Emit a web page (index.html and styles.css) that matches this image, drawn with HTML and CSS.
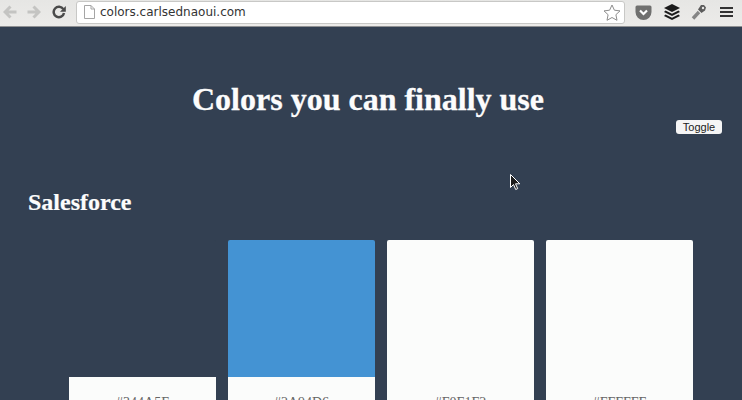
FILE: index.html
```html
<!DOCTYPE html>
<html lang="en">
<head>
<meta charset="utf-8">
<title>Colors you can finally use</title>
<link rel="stylesheet" href="styles.css">
</head>
<body>
<header class="chrome">
  <svg class="nav" width="14" height="14" viewBox="0 0 14 14"><path d="M13.500 7H3M7.500 1.500 2 7l5.500 5.500" fill="none" stroke="#c4c4c2" stroke-width="3"/></svg>
  <svg class="nav next" width="14" height="14" viewBox="0 0 14 14"><path d="M.5 7H11M6.500 1.500 12 7l-5.500 5.500" fill="none" stroke="#c4c4c2" stroke-width="3"/></svg>
  <svg class="nav reload" width="14" height="14" viewBox="0 0 14 14"><path d="M11.300 4.200A5.200 5.200 0 1 0 12 8" fill="none" stroke="#4a4a4a" stroke-width="2.500"/><path d="M13.800 1v5.800H8z" fill="#4a4a4a"/></svg>
  <div class="omnibox">
    <svg class="doc" width="11" height="14" viewBox="0 0 11 14"><path d="M.5.500h6.500l3.500 3.500v9.500H.500zM7 .500V4h3.500" fill="#fff" stroke="#a5a5a5"/></svg>
    <span class="url">colors.carlsednaoui.com</span>
    <svg class="star" width="18" height="17" viewBox="0 0 18 17"><path d="m9 1 2.400 5.200 5.600.700-4.100 3.800 1.100 5.600L9 13.500l-5 2.800 1.100-5.600L1 6.900l5.600-.7z" fill="#fff" stroke="#8d8d8d"/></svg>
  </div>
  <svg class="ext pocket" width="17" height="15" viewBox="0 0 17 15"><path d="M2 .500h13A1.500 1.500 0 0 1 16.500 2v5a8 8 0 0 1-16 0V2A1.500 1.500 0 0 1 2 .500z" fill="#70706f"/><path d="m5 5.500 3.500 3.500L12 5.500" fill="none" stroke="#fff" stroke-width="2.200"/></svg>
  <svg class="ext layers" width="16" height="16" viewBox="0 0 16 16"><path d="M8 0l8 4-8 4-8-4z" fill="#1b1b1b"/><path d="M1.500 6.500 8 9.800l6.500-3.300L16 8l-8 4-8-4z" fill="#1b1b1b"/><path d="M1.500 10.500 8 13.800l6.500-3.300L16 12l-8 4-8-4z" fill="#1b1b1b"/></svg>
  <svg class="ext wrench" width="16" height="16" viewBox="0 0 16 16"><path d="M2 14.500 8 8" stroke="#858585" stroke-width="3.400" fill="none"/><path d="M10 1h3l2 2.500-1 3-3.500 2.500L7 5.500z" fill="#5c5c5c"/><circle cx="12" cy="4" r="1.200" fill="#e8e8e6"/></svg>
  <div class="menu"><i></i><i></i><i></i></div>
</header>
<main class="page">
  <h1 class="title">Colors you can finally use</h1>
  <div class="toggle-row"><button class="toggle">Toggle</button></div>
  <svg class="cursor" width="11" height="17" viewBox="0 0 11 17"><path d="M.5.500v13l3-3 2.200 5 2-.9-2.200-4.800h4.300z" fill="#1a1a1a" stroke="#fff"/></svg>
  <h2 class="brand">Salesforce</h2>
  <section class="swatches">
    <article class="swatch"><div class="chip chip-dark"></div><div class="label">#344A5F</div></article>
    <article class="swatch"><div class="chip chip-blue"></div><div class="label">#2A94D6</div></article>
    <article class="swatch"><div class="chip chip-light"></div><div class="label">#F0F1F2</div></article>
    <article class="swatch"><div class="chip chip-white"></div><div class="label">#FFFFFF</div></article>
  </section>
</main>
</body>
</html>
```
FILE: styles.css
```css
* { box-sizing: border-box; }
html, body { margin: 0; height: 100%; overflow: hidden; }
body { background: #334052; }
.chrome {
  height: 27px;
  display: flex;
  align-items: center;
  background: linear-gradient(#e6e6e4, #ecebe9);
  border-bottom: 1px solid #8f9092;
  padding: 0 0 2px 3px;
}
.nav { flex: none; }
.next { margin-left: 10px; }
.reload { margin-left: 11px; }
.omnibox {
  flex: none;
  width: 549px;
  height: 23px;
  margin-left: 10px;
  display: flex;
  align-items: center;
  background: #fff;
  border: 1px solid #c8c8c6;
  border-radius: 3px;
  padding: 0 2px 0 7px;
}
.doc { flex: none; }
.url {
  flex: 1;
  margin-left: 5px;
  font: 12px/1 "DejaVu Sans", sans-serif;
  color: #333;
}
.star { flex: none; margin-right: 1px; }
.ext { flex: none; }
.pocket { margin-left: 10px; }
.layers { margin-left: 12px; }
.wrench { margin-left: 11px; }
.menu { margin-left: 13px; width: 13px; display: flex; flex-direction: column; gap: 2px; }
.menu i { display: block; height: 2px; background: #333; }
.page { position: relative; height: 373px; overflow: hidden; color: #fff; font-family: "Liberation Serif", serif; }
.title {
  margin: 0;
  padding: 53px 6px 0 0;
  font-size: 32px;
  line-height: 38px;
  font-weight: 700;
  text-align: center;
  color: #fcfcfc;
  -webkit-text-stroke: .3px #fcfcfc;
}
.toggle-row { display: flex; justify-content: flex-end; padding: 2px 20px 0 0; height: 18px; }
.toggle {
  width: 46px;
  height: 14px;
  padding: 0;
  border: 0;
  border-radius: 3px;
  background: #f5f5f5;
  color: #222;
  font: 11px/14px "Liberation Sans", sans-serif;
}
.cursor { position: absolute; left: 510px; top: 147px; }
.brand { margin: 0; padding: 52px 0 0 28px; font-size: 24px; line-height: 28px; font-weight: 700; color: #fcfcfc; -webkit-text-stroke: .2px #fcfcfc; }
.swatches { display: flex; gap: 12px; margin: 24px 0 0 69px; }
.swatch { width: 147px; }
.chip { height: 137px; border-radius: 2px 2px 0 0; }
.chip-dark { background: #334052; }
.chip-blue { background: #4493d3; }
.chip-light { background: #fbfcfb; }
.chip-white { background: #fbfcfb; }
.label {
  height: 60px;
  padding-top: 16px;
  background: #fbfcfb;
  color: #666;
  font: 14px/20px "Liberation Serif", serif;
  text-align: center;
}
```
